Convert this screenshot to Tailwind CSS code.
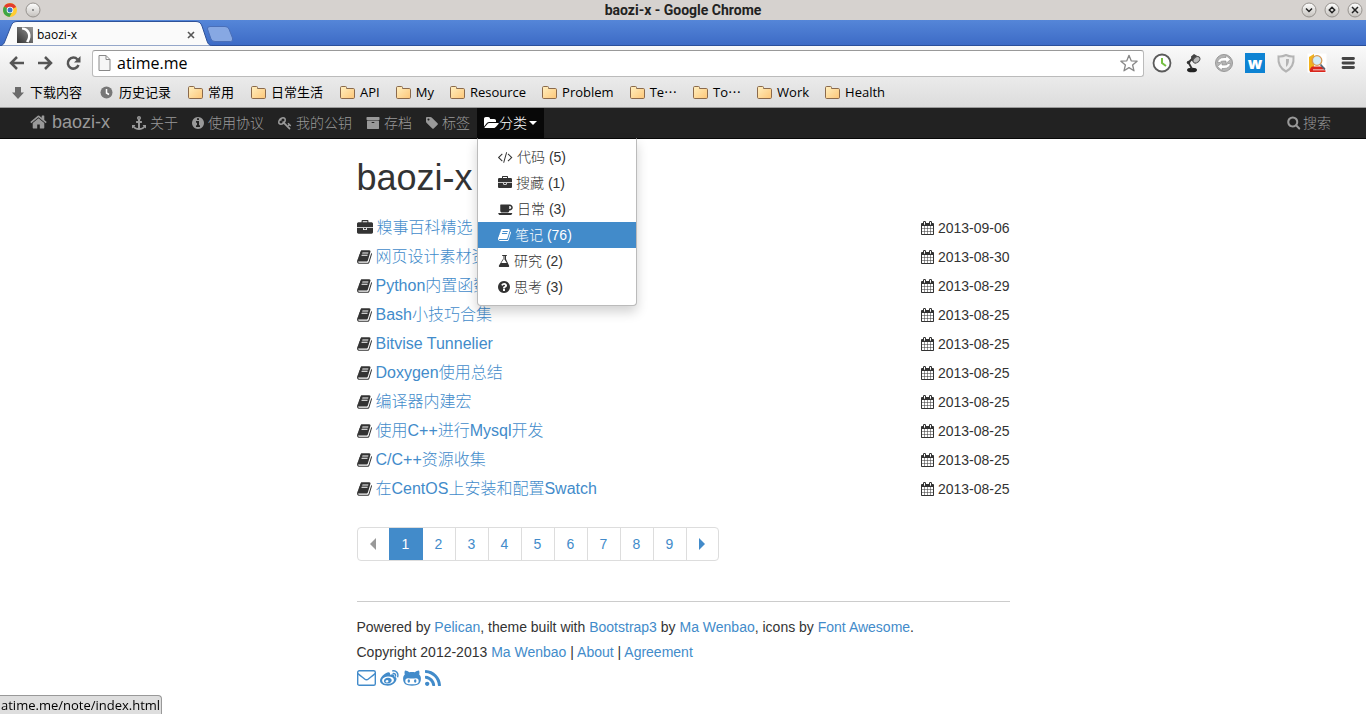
<!DOCTYPE html>
<html lang="zh-CN">
<head>
<meta charset="utf-8">
<title>baozi-x</title>
<script src="https://cdn.jsdelivr.net/npm/@tailwindcss/browser@4"></script>
</head>
<body class="min-h-screen bg-white font-['Liberation_Sans','Noto_Sans_CJK_SC',sans-serif] text-sm text-[#333]">

<svg class="absolute size-0" aria-hidden="true">
  <defs>
    <linearGradient id="fold" x1="0" y1="0" x2="1" y2="1"><stop offset="0" stop-color="#fff0c0"/><stop offset="1" stop-color="#fdc678"/></linearGradient>
    <linearGradient id="knob" x1="0" y1="0" x2="0" y2="1"><stop offset="0" stop-color="#fff"/><stop offset="1" stop-color="#c4c0bc"/></linearGradient>
    <linearGradient id="moon" x1="0" y1="1" x2="1" y2="0"><stop offset="0" stop-color="#333"/><stop offset="1" stop-color="#999"/></linearGradient>
  </defs>
  <symbol id="home" viewBox="64 0 1664 1792"><path d="M1472 992v480q0 26-19 45t-45 19h-384v-384h-256v384h-384q-26 0-45-19t-19-45v-480q0-1 .5-3t.5-3l575-474 575 474q1 2 1 6zm223-69l-62 74q-8 9-21 11h-3q-13 0-21-7l-692-577-692 577q-12 8-24 7-13-2-21-11l-62-74q-8-10-7-23.5t11-21.5l719-599q32-26 76-26t76 26l244 204v-195q0-14 9-23t23-9h192q14 0 23 9t9 23v408l219 182q10 8 11 21.5t-7 23.5z"/></symbol>
  <symbol id="search" viewBox="64 64 1728 1792"><path d="M1216 832q0-185-131.5-316.5t-316.5-131.5-316.5 131.5-131.5 316.5 131.5 316.5 316.5 131.5 316.5-131.5 131.5-316.5zm512 832q0 52-38 90t-90 38q-54 0-90-38l-343-342q-179 124-399 124-143 0-273.5-55.5t-225-150-150-225-55.5-273.5 55.5-273.5 150-225 225-150 273.5-55.5 273.5 55.5 225 150 150 225 55.5 273.5q0 220-124 399l343 343q37 37 37 90z"/></symbol>
  <symbol id="info" viewBox="128 0 1536 1792"><path d="M1152 1376v-160q0-14-9-23t-23-9h-96v-512q0-14-9-23t-23-9h-320q-14 0-23 9t-9 23v160q0 14 9 23t23 9h96v320h-96q-14 0-23 9t-9 23v160q0 14 9 23t23 9h448q14 0 23-9t9-23zm-128-896v-160q0-14-9-23t-23-9h-192q-14 0-23 9t-9 23v160q0 14 9 23t23 9h192q14 0 23-9t9-23zm640 416q0 209-103 385.5t-279.5 279.5-385.5 103-385.5-103-279.5-279.5-103-385.5 103-385.5 279.5-279.5 385.5-103 385.5 103 279.5 279.5 103 385.5z"/></symbol>
  <symbol id="anchor" viewBox="0 0 1792 1792"><path d="M960 256q0-26-19-45t-45-19-45 19-19 45 19 45 45 19 45-19 19-45zm832 928v352q0 22-20 30-8 2-12 2-13 0-23-9l-93-93q-119 143-318.5 226.5t-429.5 83.5-429.5-83.5-318.5-226.5l-93 93q-9 9-23 9-4 0-12-2-20-8-20-30v-352q0-14 9-23t23-9h352q22 0 30 20 8 19-7 35l-100 100q67 91 189.5 153.5t271.5 82.5v-647h-192q-26 0-45-19t-19-45v-128q0-26 19-45t45-19h192v-163q-58-34-93-92.5t-35-128.5q0-106 75-181t181-75 181 75 75 181q0 70-35 128.5t-93 92.5v163h192q26 0 45 19t19 45v128q0 26-19 45t-45 19h-192v647q149-20 271.5-82.5t189.5-153.5l-100-100q-15-16-7-35 8-20 30-20h352q14 0 23 9t9 23z"/></symbol>
  <symbol id="key" viewBox="0 0 1792 1792"><path d="M832 512q0-80-56-136t-136-56-136 56-56 136q0 42 19 83-41-19-83-19-80 0-136 56t-56 136 56 136 136 56 136-56 56-136q0-42-19-83 41 19 83 19 80 0 136-56t56-136zm851 704q0 17-49 66t-66 49q-9 0-28.5-16t-36.5-33-38.5-40-24.5-26l-96 96 220 220q28 28 28 68 0 42-39 81t-81 39q-40 0-68-28l-671-671q-176 131-365 131-163 0-265.5-102.5t-102.5-265.5q0-160 95-313t248-248 313-95q163 0 265.5 102.5t102.5 265.5q0 189-131 365l355 355 96-96q-3-3-26-24.5t-40-38.5-33-36.5-16-28.5q0-17 49-66t66-49q13 0 23 10 6 6 46 44.5t82 79.5 86.5 86 73 78 28.5 41z"/></symbol>
  <symbol id="archive" viewBox="0 0 1792 1792"><path d="M1088 832q0-26-19-45t-45-19h-256q-26 0-45 19t-19 45 19 45 45 19h256q26 0 45-19t19-45zm576-192v960q0 26-19 45t-45 19h-1408q-26 0-45-19t-19-45v-960q0-26 19-45t45-19h1408q26 0 45 19t19 45zm64-448v256q0 26-19 45t-45 19h-1536q-26 0-45-19t-19-45v-256q0-26 19-45t45-19h1536q26 0 45 19t19 45z"/></symbol>
  <symbol id="tag" viewBox="128 0 1536 1792"><path d="M576 448q0-53-37.500-90.500t-90.500-37.500-90.500 37.500-37.500 90.500 37.500 90.500 90.500 37.500 90.500-37.500 37.500-90.500zm1067 576q0 53-37 90l-491 492q-39 37-91 37-53 0-90-37l-715-716q-38-37-64.500-101t-26.500-117v-416q0-52 38-90t90-38h416q53 0 117 26.500t102 64.500l715 714q37 39 37 91z"/></symbol>
  <symbol id="folder-open" viewBox="0 0 1920 1792"><path d="M1879 952q0 31-31 66l-336 396q-43 51-120.500 86.500t-143.500 35.500h-1088q-34 0-60.500-13t-26.500-43q0-31 31-66l336-396q43-51 120.500-86.500t143.500-35.500h1088q34 0 60.500 13t26.500 43zm-343-344v160h-832q-94 0-197 47.500t-164 119.500l-337 396-5 6q0-4-.5-12.500t-.5-12.500v-960q0-92 66-158t158-66h320q92 0 158 66t66 158v32h544q92 0 158 66t66 158z"/></symbol>
  <symbol id="code" viewBox="-20 0 1920 1792"><path d="M553 1399l-50 50q-10 10-23 10t-23-10l-466-466q-10-10-10-23t10-23l466-466q10-10 23-10t23 10l50 50q10 10 10 23t-10 23l-393 393 393 393q10 10 10 23t-10 23zm591-1067l-373 1291q-4 13-15.500 19.500t-23.500 2.500l-62-17q-13-4-19.500-15.500t-2.500-24.500l373-1291q4-13 15.500-19.500t23.500-2.500l62 17q13 4 19.500 15.500t2.500 24.500zm657 651l-466 466q-10 10-23 10t-23-10l-50-50q-10-10-10-23t10-23l393-393-393-393q-10-10-10-23t10-23l50-50q10-10 23-10t23 10l466 466q10 10 10 23t-10 23z"/></symbol>
  <symbol id="briefcase" viewBox="0 0 1792 1792"><path d="M640 256h512v-128h-512v128zm1152 640v480q0 66-47 113t-113 47h-1472q-66 0-113-47t-47-113v-480h672v160q0 26 19 45t45 19h320q26 0 45-19t19-45v-160h672zm-768 0v128h-256v-128h256zm768-480v384h-1792v-384q0-66 47-113t113-47h352v-160q0-40 28-68t68-28h576q40 0 68 28t28 68v160h352q66 0 113 47t47 113z"/></symbol>
  <symbol id="coffee" viewBox="0 128 1856 1792"><path d="M1664 832q0-80-56-136t-136-56h-64v384h64q80 0 136-56t56-136zm-1664 704h1792q0 106-75 181t-181 75h-1280q-106 0-181-75t-75-181zm1856-704q0 159-112.500 271.500t-271.500 112.500h-64v32q0 92-66 158t-158 66h-704q-92 0-158-66t-66-158v-736q0-26 19-45t45-19h1152q159 0 271.500 112.500t112.500 271.500z"/></symbol>
  <symbol id="book" viewBox="0 0 1664 1792"><path d="M1639 478q40 57 18 129l-275 906q-19 64-76.500 107.500t-122.500 43.500h-923q-77 0-148.500-53.500t-99.500-131.500q-24-67-2-127 0-4 3-27t4-37q1-8-3-21.500t-3-19.500q2-11 8-21t16.500-23.500 16.500-23.500q23-38 45-91.500t30-91.500q3-10 .5-30t-.5-28q3-11 17-28t17-23q21-36 42-92t25-90q1-9-2.500-32t.5-28q4-13 22-30.500t22-22.500q19-26 42.500-84.500t27.500-96.500q1-8-3-25.500t-2-26.500q2-8 9-18t18-23 17-21q8-12 16.500-30.500t15-35 16-36 19.500-32 26.500-23.500 36-11.500 47.500 5.500l-1 3q38-9 51-9h761q74 0 114 56t18 130l-274 906q-36 119-71.500 153.500t-128.500 34.500h-869q-27 0-38 15-11 16-1 43 24 70 144 70h923q29 0 56-15.500t35-41.500l300-987q7-22 5-57 38 15 59 43zm-1064 2q-4 13 2 22.500t20 9.500h608q13 0 25.500-9.500t16.500-22.500l21-64q4-13-2-22.500t-20-9.500h-608q-13 0-25.500 9.500t-16.500 22.500zm-83 256q-4 13 2 22.500t20 9.500h608q13 0 25.500-9.500t16.500-22.500l21-64q4-13-2-22.500t-20-9.500h-608q-13 0-25.500 9.500t-16.500 22.500z"/></symbol>
  <symbol id="flask" viewBox="128 0 1536 1792"><path d="M1527 1447q56 89 21.500 153t-140.500 64h-1024q-106 0-140.500-64t21.500-153l503-793v-399h-64q-26 0-45-19t-19-45 19-45 45-19h512q26 0 45 19t19 45-19 45-45 19h-64v399zm-715-725l-272 430h712l-272-430-20-31v-436h-128v436z"/></symbol>
  <symbol id="question" viewBox="128 0 1536 1792"><path d="M1024 1376v-192q0-14-9-23t-23-9h-192q-14 0-23 9t-9 23v192q0 14 9 23t23 9h192q14 0 23-9t9-23zm256-672q0-88-55.500-163t-138.500-116-170-41q-243 0-371 213-15 24 8 42l132 100q7 6 19 6 16 0 25-12 53-68 86-92 34-24 86-24 48 0 85.500 26t37.500 59q0 38-20 61t-68 45q-63 28-115.500 86.500t-52.500 125.500v36q0 14 9 23t23 9h192q14 0 23-9t9-23q0-19 21.500-49.500t54.500-49.500q32-18 49-28.500t46-35 44.500-48 28-60.500 12.500-81zm384 192q0 209-103 385.500t-279.500 279.500-385.500 103-385.500-103-279.500-279.500-103-385.500 103-385.500 279.500-279.500 385.500-103 385.500 103 279.500 279.500 103 385.500z"/></symbol>
  <symbol id="calendar" viewBox="64 0 1664 1792"><path d="M192 1664h288v-288h-288v288zm352 0h320v-288h-320v288zm-352-352h288v-320h-288v320zm352 0h320v-320h-320v320zm-352-384h288v-288h-288v288zm736 736h320v-288h-320v288zm-384-736h320v-288h-320v288zm768 736h288v-288h-288v288zm-384-352h320v-320h-320v320zm-352-864v-288q0-13-9.500-22.500t-22.500-9.500h-64q-13 0-22.500 9.500t-9.500 22.500v288q0 13 9.500 22.500t22.500 9.500h64q13 0 22.500-9.500t9.500-22.500zm736 864h288v-320h-288v320zm-384-384h320v-288h-320v288zm384 0h288v-288h-288v288zm32-480v-288q0-13-9.500-22.500t-22.500-9.500h-64q-13 0-22.500 9.500t-9.500 22.500v288q0 13 9.500 22.500t22.500 9.500h64q13 0 22.500-9.500t9.500-22.500zm384-64v1280q0 52-38 90t-90 38h-1408q-52 0-90-38t-38-90v-1280q0-52 38-90t90-38h128v-96q0-66 47-113t113-47h64q66 0 113 47t47 113v96h384v-96q0-66 47-113t113-47h64q66 0 113 47t47 113v96h128q52 0 90 38t38 90z"/></symbol>
  <symbol id="rss" viewBox="192 128 1408 1408"><path d="M576 1344q0 80-56 136t-136 56-136-56-56-136 56-136 136-56 136 56 56 136zm512 123q2 28-17 48-18 21-47 21h-135q-25 0-43-16.500t-20-41.500q-22-229-184.500-391.500t-391.500-184.500q-25-2-41.500-20t-16.500-43v-135q0-29 21-47 17-17 43-17h5q160 13 306 80.500t259 181.500q114 113 181.500 259t80.500 306zm512 2q2 27-18 47-18 20-46 20h-143q-26 0-44.500-17.500t-19.500-42.500q-12-215-101-408.500t-231.500-336-336-231.500-408.500-102q-25-1-42.500-19.500t-17.500-43.500v-143q0-28 20-46 18-18 44-18h3q262 13 501.500 120t425.500 294q187 186 294 425.500t120 501.500z"/></symbol>
  <symbol id="mail" viewBox="0 0 19 16"><g fill="none" stroke="currentColor" stroke-width="1.400"><rect x=".7" y=".7" width="17.600" height="14.600" rx="1.600"/><path d="M.8 3.500C3 5.500 5.500 7.300 7.600 9c1.200 1 2.600 1 3.800 0 2.100-1.700 4.600-3.500 6.800-5.500"/></g></symbol>
  <symbol id="weibo" viewBox="0 0 19 16"><path fill-rule="evenodd" d="M7.500 2.500c1.700-.5 2.900.3 2.500 2.200 2.400-1 4.800-.7 4.300 1.800 1.500.4 2.400 1.400 2.200 2.800C16 12.800 12.200 15.700 7.900 15.700 3.600 15.700 0 13.800 0 10.800 0 7.600 4.200 3.500 7.500 2.500zM7.700 6.600c-3.400.3-5.700 2.200-5.500 4.300s2.900 3.400 6.200 3.100 5.700-2.200 5.500-4.300-2.900-3.400-6.200-3.100zM7.900 7.700c2.100-.2 3.800 1 3.800 2.600S10 13.500 7.800 13.600c-2.300.1-3.900-1-3.900-2.600 0-1.700 1.800-3.100 4-3.300zM6.600 10.200c-.9.200-1.300 1-1 1.600s1.200.8 2 .4 1.200-1 .8-1.500-1.100-.7-1.800-.5z"/><path fill="none" stroke="currentColor" stroke-width="1.400" stroke-linecap="round" d="M12.700.9c3.300-.6 6 2.200 5 5.800M13.200 3.500c1.500-.3 2.700.9 2.300 2.500"/></symbol>
  <symbol id="github" viewBox="0 0 18 16"><path fill-rule="evenodd" d="M2 .6c1.600.1 3 .8 4.200 1.600 1.900-.4 3.800-.4 5.700 0C13.100 1.400 14.400.7 16 .6c.6 1.400.6 2.700.2 4C17.500 6 18 7.300 17.900 9c-.2 4.800-2.900 6.700-8.900 6.700S.3 13.800.1 9C0 7.300.5 6 1.800 4.600c-.4-1.300-.4-2.600.2-4zM5 8.300c-1.700 0-2.700.9-2.700 2.600 0 2.700 2.200 3.400 6.700 3.400s6.700-.7 6.700-3.400c0-1.700-1-2.600-2.700-2.600-1.400 0-2.600.3-4 .3s-2.600-.3-4-.3z"/><ellipse cx="5.800" cy="11" rx="1.200" ry="1.700"/><ellipse cx="12.200" cy="11" rx="1.200" ry="1.700"/></symbol>
  <symbol id="folder" viewBox="0 0 15 13"><path d="M.5 3V1.700Q.5.5 1.700.5h3.800Q6.500.5 6.500 1.500V2.500h6.800q1.200 0 1.200 1.200v7.600q0 1.200-1.200 1.200H1.700Q.5 12.500.5 11.300z" fill="url(#fold)" stroke="#8b6a4c"/></symbol>
</svg>

<header class="font-['Open_Sans','Noto_Sans_CJK_SC',sans-serif] text-black">
  <div class="flex h-5 items-center justify-between bg-[#d6d2cf] px-[3px]">
    <div class="flex flex-1 items-center gap-2">
      <svg class="size-[14px]" viewBox="0 0 14 14"><circle cx="7" cy="7" r="7" fill="#fc3"/><path d="M7 7L1 3.500A7 7 0 0 1 13.200 4z" fill="#e33b2e"/><path d="M7 7L1 3.500A7 7 0 0 0 6.500 14l3-5.500z" fill="#3fa546"/><circle cx="7" cy="7" r="3.300" fill="#fff"/><circle cx="7" cy="7" r="2.500" fill="#3b78c4"/></svg>
      <svg class="size-4" viewBox="0 0 16 16"><circle cx="8" cy="8" r="7" fill="url(#knob)" stroke="#96928e"/><circle cx="8" cy="8" r="1" fill="#777"/></svg>
    </div>
    <div class="font-['Roboto',sans-serif] text-[14px] leading-5 font-bold text-[#222]">baozi-x - Google Chrome</div>
    <div class="flex flex-1 items-center justify-end gap-[7px]">
      <button aria-label="最小化" class="size-4"><svg viewBox="0 0 16 16"><circle cx="8" cy="8" r="7" fill="url(#knob)" stroke="#96928e"/><path d="M5 6.500l3 3 3-3" fill="none" stroke="#222" stroke-width="1.500"/></svg></button>
      <button aria-label="最大化" class="size-4"><svg viewBox="0 0 16 16"><circle cx="8" cy="8" r="7" fill="url(#knob)" stroke="#96928e"/><path d="M8 5.300L10.700 8 8 10.700 5.300 8z" fill="none" stroke="#222" stroke-width="1.500"/></svg></button>
      <button aria-label="关闭" class="size-4"><svg viewBox="0 0 16 16"><circle cx="8" cy="8" r="7" fill="url(#knob)" stroke="#96928e"/><path d="M5 5l6 6M11 5l-6 6" fill="none" stroke="#222" stroke-width="1.500"/></svg></button>
    </div>
  </div>

  <div class="flex h-[26px] items-start border-b border-[#2b4f9a] bg-linear-to-b from-[#5586d8] to-[#3d6bc6]">
    <div class="relative flex h-[26px] w-[206px] shrink-0 items-center gap-1 pt-1 pr-[7px] pl-[17px]">
      <svg class="absolute top-0 left-0 h-[26px] w-[212px]" viewBox="0 0 212 26"><path d="M0 26c3-1 4-2 5-5l6-15q1.500-4.500 6-4.500h179q4.500 0 6 4.500l5 15c1 3 2 4 5 5z" fill="#fafafa" stroke="#2f5299"/></svg>
      <svg class="relative size-4" viewBox="0 0 16 16"><path d="M0 0h16v16H0z" fill="url(#moon)"/><path d="M5 .5c8 0 11 8 6.500 15L9 14.500c4-5 2-11-4-12z" fill="#fff"/></svg>
      <span class="relative flex-1 text-xs leading-4">baozi-x</span>
      <button aria-label="关闭标签页" class="relative size-4"><svg viewBox="0 0 16 16"><path d="M5 5l6 6M11 5l-6 6" stroke="#555" stroke-width="1.600"/></svg></button>
    </div>
    <button aria-label="新标签页" class="mt-[6px] h-4 w-[28px]"><svg viewBox="0 0 28 16"><path d="M4 .5h15q3 0 4 2.500l3.500 9q1 3.500-2 3.500H9q-3 0-4-2.500L1.500 3Q1 .5 4 .5z" fill="#87a8e3" stroke="#4a6fb8"/></svg></button>
  </div>

  <div class="border-b border-[#9a9a9a] bg-linear-to-b from-[#fafafa] to-[#dcdcdc]">
    <div class="flex h-[34px] items-center pr-2 pl-[9px]">
      <div class="flex items-center gap-3 pr-[11px] text-[#555]">
        <button aria-label="后退" class="size-4"><svg viewBox="0 0 16 16" fill="none" stroke="currentColor" stroke-width="2.500"><path d="M15 8H3M8 2L2 8l6 6"/></svg></button>
        <button aria-label="前进" class="size-4"><svg viewBox="0 0 16 16" fill="none" stroke="currentColor" stroke-width="2.500"><path d="M1 8h12M8 2l6 6-6 6"/></svg></button>
        <button aria-label="重新加载" class="size-4"><svg viewBox="0 0 16 16"><path d="M12.500 4.500A5.500 5.500 0 1 0 13.500 10" fill="none" stroke="currentColor" stroke-width="2.500"/><path d="M15.500 1v6.500H9z" fill="currentColor"/></svg></button>
      </div>
      <div class="flex h-[27px] min-w-0 flex-1 items-center gap-[6px] rounded-[3px] border border-[#bbb] border-t-[#999] bg-white px-[5px]">
        <svg class="h-4 w-[13px] shrink-0" viewBox="0 0 13 16"><path d="M1 .5h7l4 4v11H1zM8 .5v4h4" fill="#f6f6f6" stroke="#888"/></svg>
        <input aria-label="地址栏" value="atime.me" class="min-w-0 flex-1 bg-transparent text-base leading-6 outline-none">
        <button aria-label="收藏" class="size-[18px]"><svg viewBox="0 0 18 18"><path d="M9 1.300l2.200 5.500 5.900.4-4.500 3.800 1.400 5.800L9 13.600l-5 3.200L5.400 11 .9 7.200l5.900-.4z" fill="#fff" stroke="#888" stroke-width="1.300" stroke-linejoin="round"/></svg></button>
      </div>
      <div class="flex items-center gap-[11px] pl-2">
        <button aria-label="历史" class="size-5"><svg viewBox="0 0 20 20"><circle cx="10" cy="10" r="8.500" fill="#fff" stroke="#5b5b5b" stroke-width="1.800"/><path d="M10 5v5l4 3" fill="none" stroke="#76c043" stroke-width="2"/></svg></button>
        <button aria-label="台灯" class="size-5"><svg viewBox="0 0 20 20"><ellipse cx="9" cy="17" rx="5" ry="2.300" fill="#222"/><path d="M9 16L5.500 9.500l4-4" fill="none" stroke="#333" stroke-width="1.800"/><circle cx="5.500" cy="9.500" r="1.700" fill="#333"/><path d="M8 3.500l3-2.500 6 3.500-5 6-3.500-3z" fill="#444"/><ellipse cx="13.500" cy="6.800" rx="3.800" ry="2.600" fill="#bbb" stroke="#555" transform="rotate(-40 13.500 6.800)"/></svg></button>
        <button aria-label="同步" class="size-5"><svg viewBox="0 0 20 20"><circle cx="10" cy="10" r="8.500" fill="#b5b5b5" stroke="#999"/><path d="M3.500 9.500q1-5 6.500-5h2v-2l4.500 4-4.500 4v-2.500H9q-2.500 0-3 1.500zM16.500 10.500q-1 5-6.500 5H8v2l-4.500-4 4.500-4V12h3q2.500 0 3-1.500z" fill="#fff" stroke="#888" stroke-width=".6"/></svg></button>
        <button aria-label="W" class="flex size-5 items-center justify-center bg-[#0d83d3]"><span class="text-base leading-4 font-extrabold text-white">w</span></button>
        <button aria-label="护盾" class="size-5"><svg viewBox="0 0 20 20"><path d="M10 2q4 2 7.500 1.500Q18.500 14 10 18.500 1.500 14 2.500 3.500 6 4 10 2z" fill="#eee" stroke="#b4b4b4" stroke-width="2"/><path d="M10 6h3q0 6-3 8z" fill="#b4b4b4"/></svg></button>
        <button aria-label="搜书" class="size-5"><svg viewBox="0 0 20 20"><path d="M.5.500h19v19H.5z" fill="#fff"/><path d="M2 4l5-3v13l-5 4z" fill="#f2b21b"/><path d="M5 13.500h10l3 1.500v1.500H6v.8h12.500V19H3q-1-3 2-5.500z" fill="#d9261c"/><circle cx="10" cy="7.500" r="4.800" fill="#cdebfa" fill-opacity=".9" stroke="#d79a55" stroke-width="1.300"/><path d="M13.500 11.500l4.500 5" stroke="#567" stroke-width="1.800"/></svg></button>
        <button aria-label="菜单" class="size-5"><svg viewBox="0 0 20 20"><path d="M5 5.500h10.500M5 10h10.500M5 14.500h10.500" stroke="#444" stroke-width="2.800" stroke-linecap="round"/></svg></button>
      </div>
    </div>
    <nav aria-label="书签栏" class="flex h-[27px] items-center gap-[17px] pb-[3px] pl-[10px] text-[13px] leading-5">
      <a href="#" class="flex items-center gap-[5px]"><svg class="size-[15px]" viewBox="0 0 15 15"><path d="M5 2h6v5.500h3L8 14 2 7.500h3z" fill="#6b6b6b"/></svg>下载内容</a>
      <a href="#" class="flex items-center gap-[5px]"><svg class="size-[15px]" viewBox="0 0 15 15"><circle cx="7.500" cy="7.500" r="6" fill="#777"/><path d="M7.500 4v4l2.500 1.500" fill="none" stroke="#fff" stroke-width="1.500"/></svg>历史记录</a>
      <a href="#" class="flex items-center gap-[5px]"><svg class="h-[13px] w-[15px]"><use href="#folder"/></svg>常用</a>
      <a href="#" class="flex items-center gap-[5px]"><svg class="h-[13px] w-[15px]"><use href="#folder"/></svg>日常生活</a>
      <div class="flex items-center gap-4">
        <a href="#" class="flex items-center gap-[5px]"><svg class="h-[13px] w-[15px]"><use href="#folder"/></svg>API</a>
        <a href="#" class="flex items-center gap-[5px]"><svg class="h-[13px] w-[15px]"><use href="#folder"/></svg>My</a>
        <a href="#" class="flex items-center gap-[5px]"><svg class="h-[13px] w-[15px]"><use href="#folder"/></svg>Resource</a>
        <a href="#" class="flex items-center gap-[5px]"><svg class="h-[13px] w-[15px]"><use href="#folder"/></svg>Problem</a>
        <a href="#" class="flex items-center gap-[5px]"><svg class="h-[13px] w-[15px]"><use href="#folder"/></svg>Te⋯</a>
        <a href="#" class="flex items-center gap-[5px]"><svg class="h-[13px] w-[15px]"><use href="#folder"/></svg>To⋯</a>
        <a href="#" class="flex items-center gap-[5px]"><svg class="h-[13px] w-[15px]"><use href="#folder"/></svg>Work</a>
        <a href="#" class="flex items-center gap-[5px]"><svg class="h-[13px] w-[15px]"><use href="#folder"/></svg>Health</a>
      </div>
    </nav>
  </div>
</header>

<nav aria-label="主导航" class="flex h-[31px] items-stretch border-b border-[#080808] bg-[#222] pr-7 pl-[30px] font-light text-[#999]">
  <a href="#" class="mr-[15px] flex items-center gap-[5px] pb-[2px] text-lg leading-6"><svg class="h-[18px] w-[17px] fill-current"><use href="#home"/></svg>baozi-x</a>
  <a href="#" class="flex items-center gap-1 px-[7px]"><svg class="size-[14px] fill-current"><use href="#anchor"/></svg>关于</a>
  <a href="#" class="flex items-center gap-1 px-[7px]"><svg class="h-[14px] w-3 fill-current"><use href="#info"/></svg>使用协议</a>
  <a href="#" class="flex items-center gap-1 px-[7px]"><svg class="size-[14px] fill-current"><use href="#key"/></svg>我的公钥</a>
  <a href="#" class="flex items-center gap-1 px-[7px]"><svg class="size-[14px] fill-current"><use href="#archive"/></svg>存档</a>
  <a href="#" class="flex items-center gap-1 px-[7px]"><svg class="h-[14px] w-3 fill-current"><use href="#tag"/></svg>标签</a>
  <div class="relative bg-[#080808]">
    <button aria-expanded="true" class="flex h-[30px] items-center px-[7px] text-white"><svg class="h-[14px] w-[15px] fill-current"><use href="#folder-open"/></svg>分类<svg class="ml-[2px] h-1 w-2 fill-current" viewBox="0 0 8 4"><path d="M0 0h8L4 4z"/></svg></button>
    <div class="absolute top-[30px] left-0 z-10 w-40 rounded-b border border-[#bbb] border-t-transparent bg-white bg-clip-padding py-[5px] text-[#333] shadow-[0_6px_12px_rgba(0,0,0,0.18)]">
      <a href="#" class="flex h-[26px] items-center gap-1 px-5"><svg class="h-[14px] w-[15px] fill-current"><use href="#code"/></svg>代码 (5)</a>
      <a href="#" class="flex h-[26px] items-center gap-1 px-5"><svg class="size-[14px] fill-current"><use href="#briefcase"/></svg>搜藏 (1)</a>
      <a href="#" class="flex h-[26px] items-center gap-1 px-5"><svg class="h-[14px] w-[15px] fill-current"><use href="#coffee"/></svg>日常 (3)</a>
      <a href="#" class="flex h-[26px] items-center gap-1 bg-[#428bca] px-5 text-white"><svg class="h-[14px] w-[13px] fill-current"><use href="#book"/></svg>笔记 (76)</a>
      <a href="#" class="flex h-[26px] items-center gap-1 px-5"><svg class="h-[14px] w-3 fill-current"><use href="#flask"/></svg>研究 (2)</a>
      <a href="#" class="flex h-[26px] items-center gap-1 px-5"><svg class="h-[14px] w-3 fill-current"><use href="#question"/></svg>思考 (3)</a>
    </div>
  </div>
  <a href="#" class="ml-auto flex items-center gap-[2px] px-[7px]"><svg class="h-[14px] w-[14px] fill-current"><use href="#search"/></svg>搜索</a>
</nav>

<main class="mx-auto w-1/2 px-[15px] pt-[19px] font-light">
  <h1 class="mb-[15px] text-4xl leading-10 font-medium">baozi-x</h1>
  <ul id="posts"></ul>
  <nav aria-label="分页" class="mt-6 flex">
    <ul class="flex overflow-hidden rounded border border-[#ddd] leading-5 text-[#428bca]">
      <li class="flex w-[31px] items-center justify-center text-[#999]"><svg class="h-3 w-[6px] fill-current" role="img" aria-label="上一页" viewBox="0 0 6 12"><path d="M6 0v12L0 6z"/></svg></li>
      <li class="-my-px"><a href="#" aria-current="page" class="block w-[34px] bg-[#428bca] py-[7px] text-center text-white">1</a></li>
      <li><a href="#" class="block w-8 py-[6px] text-center">2</a></li>
      <li><a href="#" class="block w-[33px] border-l border-[#ddd] py-[6px] text-center">3</a></li>
      <li><a href="#" class="block w-[33px] border-l border-[#ddd] py-[6px] text-center">4</a></li>
      <li><a href="#" class="block w-[33px] border-l border-[#ddd] py-[6px] text-center">5</a></li>
      <li><a href="#" class="block w-[33px] border-l border-[#ddd] py-[6px] text-center">6</a></li>
      <li><a href="#" class="block w-[33px] border-l border-[#ddd] py-[6px] text-center">7</a></li>
      <li><a href="#" class="block w-[33px] border-l border-[#ddd] py-[6px] text-center">8</a></li>
      <li><a href="#" class="block w-[33px] border-l border-[#ddd] py-[6px] text-center">9</a></li>
      <li><a href="#" aria-label="下一页" class="flex h-8 w-8 items-center justify-center border-l border-[#ddd]"><svg class="h-3 w-[6px] fill-current" viewBox="0 0 6 12"><path d="M0 0v12l6-6z"/></svg></a></li>
    </ul>
  </nav>
  <footer class="mt-10 border-t border-[#ccc] pt-[13px] leading-[25px]">
    <p>Powered by <a href="#" class="text-[#428bca]">Pelican</a>, theme built with <a href="#" class="text-[#428bca]">Bootstrap3</a> by <a href="#" class="text-[#428bca]">Ma Wenbao</a>, icons by <a href="#" class="text-[#428bca]">Font Awesome</a>.</p>
    <p>Copyright 2012-2013 <a href="#" class="text-[#428bca]">Ma Wenbao</a> | <a href="#" class="text-[#428bca]">About</a> | <a href="#" class="text-[#428bca]">Agreement</a></p>
    <div class="flex h-[26px] items-center gap-1 text-[#428bca]">
      <a href="#" aria-label="Email"><svg class="h-4 w-[19px] fill-current"><use href="#mail"/></svg></a>
      <a href="#" aria-label="Weibo"><svg class="h-4 w-[19px] fill-current"><use href="#weibo"/></svg></a>
      <a href="#" aria-label="GitHub"><svg class="h-4 w-[18px] fill-current"><use href="#github"/></svg></a>
      <a href="#" aria-label="RSS"><svg class="h-4 w-4 fill-current"><use href="#rss"/></svg></a>
    </div>
  </footer>
</main>

<div class="fixed bottom-0 left-0 rounded-tr border-t border-r border-[#999] bg-[#dedede] pr-px pl-px font-['Open_Sans',sans-serif] text-[13px] leading-[18px] text-black">atime.me/note/index.html</div>

<script>
  const posts = [
    ['briefcase', '糗事百科精选', '2013-09-06'],
    ['book', '网页设计素材资源', '2013-08-30'],
    ['book', 'Python内置函数', '2013-08-29'],
    ['book', 'Bash小技巧合集', '2013-08-25'],
    ['book', 'Bitvise Tunnelier', '2013-08-25'],
    ['book', 'Doxygen使用总结', '2013-08-25'],
    ['book', '编译器内建宏', '2013-08-25'],
    ['book', '使用C++进行Mysql开发', '2013-08-25'],
    ['book', 'C/C++资源收集', '2013-08-25'],
    ['book', '在CentOS上安装和配置Swatch', '2013-08-25']
  ];
  const width = { briefcase: 'w-4', book: 'w-[15px]' };
  document.getElementById('posts').innerHTML = posts.map(([icon, title, date]) => `
    <li class="flex h-[29px] items-center justify-between">
      <div class="flex items-center gap-1 text-base"><svg class="h-4 ${width[icon]} shrink-0 fill-current"><use href="#${icon}"/></svg><a href="#" class="text-[#428bca]">${title}</a></div>
      <time class="flex items-center gap-1"><svg class="h-[14px] w-[13px] fill-current"><use href="#calendar"/></svg>${date}</time>
    </li>`).join('');
</script>
</body>
</html>
